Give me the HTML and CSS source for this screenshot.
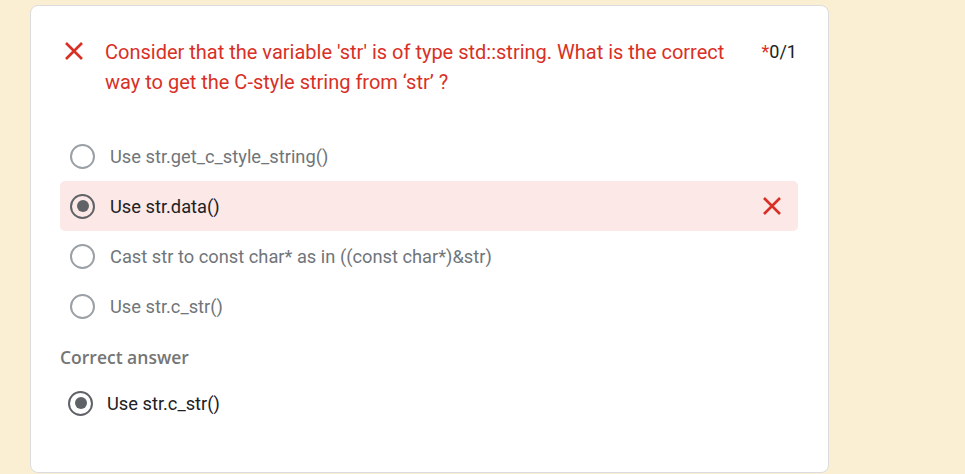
FILE: index.html
```html
<!DOCTYPE html>
<html>
<head>
<meta charset="utf-8">
<link rel="stylesheet" href="styles.css">
</head>
<body>
<div class="card">
  <div class="header">
    <svg class="head-x" width="24" height="24" viewBox="0 0 24 24"><path d="M4 4 L20 20 M20 4 L4 20" stroke="#d93025" stroke-width="2.6" fill="none"/></svg>
    <div class="question">Consider that the variable 'str' is of type std::string. What is the correct way to get the C-style string from ‘str’ ?</div>
    <div class="points"><span class="star">*</span>0/1</div>
  </div>
  <div class="options">
    <div class="opt"><span class="radio"></span><span class="label">Use str.get_c_style_string()</span></div>
    <div class="opt wrong"><span class="radio checked"></span><span class="label">Use str.data()</span>
      <svg class="opt-x" width="24" height="24" viewBox="0 0 24 24"><path d="M4 4 L20 20 M20 4 L4 20" stroke="#d93025" stroke-width="2.6" fill="none"/></svg>
    </div>
    <div class="opt"><span class="radio"></span><span class="label">Cast str to const char* as in ((const char*)&amp;str)</span></div>
    <div class="opt"><span class="radio"></span><span class="label">Use str.c_str()</span></div>
  </div>
  <div class="correct-title">Correct answer</div>
  <div class="opt correct"><span class="radio checked"></span><span class="label">Use str.c_str()</span></div>
</div>
</body>
</html>
```
FILE: styles.css
```css
html, body {
  margin: 0;
  padding: 0;
  background: #fbefd3;
  font-family: Roboto, "Liberation Sans", Arial, sans-serif;
}
.card {
  box-sizing: border-box;
  margin: 5px 0 0 30px;
  width: 799px;
  height: 468px;
  background: #fff;
  border: 1px solid #dadce0;
  border-radius: 8px;
  padding: 30px 30px 0 29px;
}
.header {
  display: flex;
  align-items: flex-start;
}
.head-x {
  flex: none;
  margin: 3px 0 0 2px;
}
.question {
  flex: 1;
  margin-left: 19px;
  color: #d93025;
  font-size: 20px;
  line-height: 30px;
  padding-right: 20px;
  margin-top: 1px;
}
.points {
  flex: none;
  font-size: 18px;
  line-height: 30px;
  color: #202124;
  margin-right: 1px;
  margin-top: 1px;
}
.star { color: #d93025; }
.options {
  margin-top: 34px;
}
.opt {
  display: flex;
  align-items: center;
  height: 50px;
  padding-left: 10px;
  border-radius: 5px;
}
.opt.wrong {
  background: #fce8e6;
}
.radio {
  box-sizing: border-box;
  width: 25px;
  height: 25px;
  border-radius: 50%;
  border: 2px solid #9aa0a6;
  flex: none;
  display: flex;
  align-items: center;
  justify-content: center;
}
.radio.checked {
  border-color: #5f6368;
}
.radio.checked::after {
  content: "";
  width: 12px;
  height: 12px;
  border-radius: 50%;
  background: #5f6368;
}
.label {
  margin-left: 15px;
  font-size: 18.3px;
  color: #70757a;
  flex: 1;
}
.wrong .label, .correct .label {
  color: #202124;
}
.opt-x {
  flex: none;
  margin-right: 14px;
}
.correct-title {
  margin-top: 14px;
  font-family: "Open Sans", Roboto, sans-serif;
  font-size: 17.5px;
  font-weight: 600;
  line-height: 24px;
  color: #757575;
}
.opt.correct {
  margin-top: 9px;
  padding-left: 8px;
}
.correct .label {
  margin-left: 14px;
}
```
